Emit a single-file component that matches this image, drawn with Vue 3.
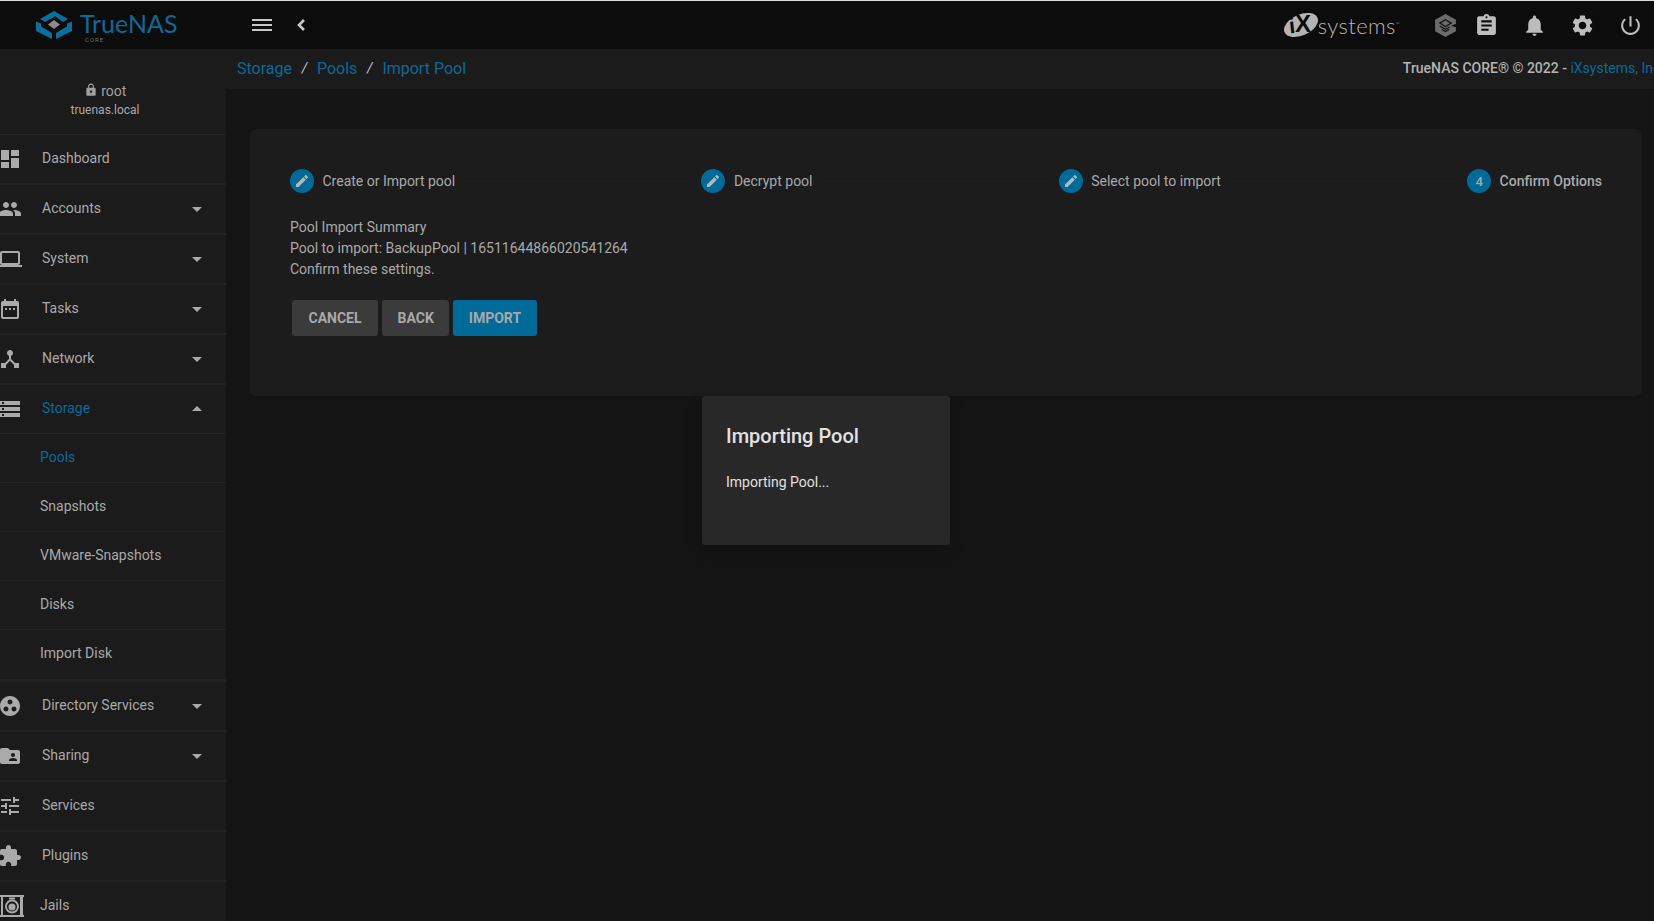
<template>
  <div class="page">
    <!-- top toolbar -->
    <header class="topbar">
      <div class="brand">
        <svg class="brand-mark" viewBox="0 0 36 28" width="36" height="28">
          <path d="M18 0L4 8l5 3 9-5 2-.9V.9z" fill="#0a6f9e" />
          <path d="M20 1.2V6l7 5 5-3z" fill="#0a6f9e" />
          <path d="M0 10.5v9.5l16 8v-6L5 15.5v-3z" fill="#0a6f9e" />
          <path d="M36 10.5v9.5l-16 8v-6l11-6.5v-3z" fill="#0a6f9e" />
          <path d="M18 9l6 4.5-6 4.5-6-4.5z" fill="#8a8a8a" />
        </svg>
        <div class="brand-name">
          <span>True</span><b>NAS</b>
          <small>CORE</small>
        </div>
      </div>
      <div class="top-nav">
        <svg viewBox="0 0 20 12" width="20" height="12" class="menu-ico"><path d="M0 0h20v2H0zM0 5h20v2H0zM0 10h20v2H0z" /></svg>
        <svg viewBox="0 0 8 12" width="8" height="12" class="back-ico"><path d="M7 1L2 6l5 5" /></svg>
      </div>
      <div class="top-right">
        <div class="ix-logo">
          <svg viewBox="0 0 36 28" width="36" height="28">
            <ellipse cx="18" cy="14" rx="18" ry="10.5" transform="rotate(-24 18 14)" fill="#b4b4b4" />
            <text x="6" y="22" class="ix-letters" transform="rotate(-6 12 14)">i</text>
            <text x="12" y="21" class="ix-letters ix-x">X</text>
          </svg>
          <span>systems</span><sup>™</sup>
        </div>
        <svg viewBox="0 0 24 24" class="top-ico tc-ico">
          <path d="M12 1l10 5.500v4L17.500 12l4.500 2v3.500L12 23 2 17.500v-11z" fill="#6b6b6b" />
          <path d="M12 6.500l5.500 3.200-5.500 3.200-5.500-3.200zM6.500 12.500l5.500 3.200 4-2.300M8.500 15.800l3.500 2 3.500-2" fill="none" stroke="#141414" stroke-width="1.200" />
        </svg>
        <svg v-for="ico in topIcons" :key="ico" viewBox="0 0 24 24" class="top-ico"><path :d="ico" /></svg>
      </div>
    </header>

    <div class="layout">
      <!-- sidebar -->
      <aside class="sidebar">
        <div class="user">
          <div class="user-name">
            <svg viewBox="0 0 24 24" width="14" height="14"><path d="M18 8h-1V6c0-2.760-2.240-5-5-5S7 3.240 7 6v2H6c-1.100 0-2 .9-2 2v10c0 1.100.9 2 2 2h12c1.100 0 2-.9 2-2V10c0-1.100-.9-2-2-2zm-6 9c-1.100 0-2-.9-2-2s.9-2 2-2 2 .9 2 2-.9 2-2 2zm3.100-9H8.900V6c0-1.710 1.390-3.100 3.100-3.100 1.710 0 3.100 1.390 3.100 3.100v2z" /></svg>
            root
          </div>
          <div class="user-host">truenas.local</div>
        </div>
        <nav>
          <template v-for="item in navItems" :key="item.label">
            <div class="nav-row" :class="{ active: item.active, open: item.open }">
              <svg v-if="item.icon" viewBox="0 0 24 24" class="nav-ico"><path :d="item.icon" /></svg>
              <svg v-else viewBox="0 0 24 24" class="nav-ico jail-ico">
                <path d="M0 1h24v2H0zM0 21h24v2H0zM1 3h2v18H1zM20 3h3v18h-3z" />
                <path d="M9 3.500h6v2H9z" />
                <circle cx="12" cy="12.500" r="6" fill="none" stroke="#aaa" stroke-width="1.800" />
                <circle cx="12" cy="13" r="3.500" />
              </svg>
              <span class="nav-label" :class="{ jail: !item.icon }">{{ item.label }}</span>
              <i v-if="item.arrow" class="caret" :class="{ up: item.open }"></i>
            </div>
            <div v-if="item.children" class="sub-list">
              <div v-for="(sub, i) in item.children" :key="sub" class="sub-row" :class="{ active: i === 0 }">{{ sub }}</div>
            </div>
          </template>
        </nav>
      </aside>

      <main class="content">
        <div class="crumbs">
          <div class="crumb-links">
            <a>Storage</a><em>/</em><a>Pools</a><em>/</em><a>Import Pool</a>
          </div>
          <div class="copyright">TrueNAS CORE® © 2022 - <a>iXsystems, Inc.</a></div>
        </div>

        <section class="card">
          <div class="stepper">
            <template v-for="(step, i) in steps" :key="step">
              <div class="step" :class="{ current: i === 3 }">
                <span class="step-dot">
                  <svg v-if="i < 3" viewBox="0 0 24 24" width="16" height="16"><path d="M3 17.250V21h3.750L17.810 9.940l-3.750-3.750L3 17.250zM20.710 7.040c.39-.39.39-1.020 0-1.410l-2.340-2.340c-.39-.39-1.020-.39-1.410 0l-1.830 1.830 3.750 3.750 1.830-1.830z" /></svg>
                  <template v-else>4</template>
                </span>
                <span>{{ step }}</span>
              </div>
              <div v-if="i < 3" class="step-line"></div>
            </template>
          </div>

          <div class="summary">
            <div>Pool Import Summary</div>
            <div>Pool to import: BackupPool | 16511644866020541264</div>
            <div>Confirm these settings.</div>
          </div>

          <div class="actions">
            <button class="btn cancel">CANCEL</button>
            <button class="btn">BACK</button>
            <button class="btn primary">IMPORT</button>
          </div>
        </section>
      </main>
    </div>

    <!-- progress dialog -->
    <div class="dialog">
      <h1>Importing Pool</h1>
      <p>Importing Pool...</p>
    </div>
  </div>
</template>

<script setup>
const topIcons = [
  'M19 3h-4.180C14.400 1.840 13.300 1 12 1c-1.300 0-2.400.84-2.820 2H5c-1.100 0-2 .9-2 2v14c0 1.100.9 2 2 2h14c1.100 0 2-.9 2-2V5c0-1.100-.9-2-2-2zm-7 0c.55 0 1 .45 1 1s-.45 1-1 1-1-.45-1-1 .45-1 1-1zm2 14H7v-2h7v2zm3-4H7v-2h10v2zm0-4H7V7h10v2z',
  'M12 22c1.100 0 2-.9 2-2h-4c0 1.100.89 2 2 2zm6-6v-5c0-3.070-1.640-5.640-4.500-6.320V4c0-.83-.67-1.500-1.500-1.500s-1.500.67-1.500 1.500v.68C7.630 5.360 6 7.920 6 11v5l-2 2v1h16v-1l-2-2z',
  'M19.140 12.940c.04-.3.06-.61.06-.94 0-.32-.02-.64-.07-.94l2.030-1.580c.18-.14.23-.41.12-.61l-1.920-3.320c-.12-.22-.37-.29-.59-.22l-2.390.96c-.5-.38-1.030-.7-1.620-.94l-.36-2.540c-.04-.24-.24-.41-.48-.41h-3.840c-.24 0-.43.17-.47.41l-.36 2.540c-.59.24-1.130.57-1.620.94l-2.390-.96c-.22-.08-.47 0-.59.22L2.740 8.870c-.12.21-.08.47.12.61l2.030 1.580c-.05.3-.09.63-.09.94s.02.64.07.94l-2.030 1.580c-.18.14-.23.41-.12.61l1.920 3.320c.12.22.37.29.59.22l2.390-.96c.5.38 1.030.7 1.620.94l.36 2.540c.05.24.24.41.48.41h3.840c.24 0 .44-.17.47-.41l.36-2.540c.59-.24 1.130-.56 1.620-.94l2.390.96c.22.08.47 0 .59-.22l1.920-3.320c.12-.22.07-.47-.12-.61l-2.010-1.580zM12 15.600c-1.980 0-3.600-1.620-3.600-3.600s1.620-3.600 3.600-3.600 3.600 1.620 3.600 3.600-1.620 3.600-3.600 3.600z',
  'M13 3h-2v10h2V3zm4.830 2.170l-1.420 1.420C17.990 7.860 19 9.810 19 12c0 3.870-3.130 7-7 7s-7-3.130-7-7c0-2.190 1.010-4.140 2.580-5.420L6.170 5.170C4.230 6.820 3 9.260 3 12c0 4.970 4.030 9 9 9s9-4.030 9-9c0-2.740-1.230-5.180-3.170-6.830z'
]

const navItems = [
  { label: 'Dashboard', icon: 'M3 13h8V3H3v10zm0 8h8v-6H3v6zm10 0h8V11h-8v10zm0-18v6h8V3h-8z' },
  { label: 'Accounts', arrow: true, icon: 'M16 11c1.660 0 2.990-1.340 2.990-3S17.660 5 16 5c-1.660 0-3 1.340-3 3s1.340 3 3 3zm-8 0c1.660 0 2.990-1.340 2.990-3S9.660 5 8 5C6.340 5 5 6.340 5 8s1.340 3 3 3zm0 2c-2.330 0-7 1.170-7 3.500V19h14v-2.500c0-2.330-4.670-3.500-7-3.500zm8 0c-.29 0-.62.02-.97.05 1.160.84 1.970 1.970 1.970 3.450V19h6v-2.500c0-2.330-4.670-3.500-7-3.500z' },
  { label: 'System', arrow: true, icon: 'M20 18c1.100 0 1.990-.9 1.990-2L22 6c0-1.100-.9-2-2-2H4c-1.100 0-2 .9-2 2v10c0 1.100.9 2 2 2H0v2h24v-2h-4zM4 6h16v10H4V6z' },
  { label: 'Tasks', arrow: true, icon: 'M19 4h-1V2h-2v2H8V2H6v2H5c-1.110 0-1.990.9-1.990 2L3 20c0 1.100.89 2 2 2h14c1.100 0 2-.9 2-2V6c0-1.100-.9-2-2-2zm0 16H5V9h14v11zM7 11h2v2H7zm4 0h2v2h-2zm4 0h2v2h-2z' },
  { label: 'Network', arrow: true, icon: 'M17 16l-4-4V8.820C14.160 8.400 15 7.300 15 6c0-1.660-1.340-3-3-3S9 4.340 9 6c0 1.300.84 2.400 2 2.820V12l-4 4H3v5h5v-3.050l4-4.200 4 4.200V21h5v-5h-4z' },
  { label: 'Storage', arrow: true, open: true, active: true, icon: 'M2 20h20v-4H2v4zm2-3h2v2H4v-2zM2 4v4h20V4H2zm4 3H4V5h2v2zm-4 7h20v-4H2v4zm2-3h2v2H4v-2z', children: ['Pools', 'Snapshots', 'VMware-Snapshots', 'Disks', 'Import Disk'] },
  { label: 'Directory Services', arrow: true, icon: 'M12 2C6.480 2 2 6.480 2 12s4.480 10 10 10 10-4.480 10-10S17.520 2 12 2zM8 17.500c-1.380 0-2.500-1.120-2.500-2.500s1.120-2.500 2.500-2.500 2.500 1.120 2.500 2.500-1.120 2.500-2.500 2.500zM9.500 8c0-1.380 1.120-2.500 2.500-2.500s2.500 1.120 2.500 2.500-1.120 2.500-2.500 2.500S9.500 9.380 9.500 8zm6.500 9.500c-1.380 0-2.500-1.120-2.500-2.500s1.120-2.500 2.500-2.500 2.500 1.120 2.500 2.500-1.120 2.500-2.500 2.500z' },
  { label: 'Sharing', arrow: true, icon: 'M20 6h-8l-2-2H4c-1.100 0-1.990.9-1.990 2L2 18c0 1.100.9 2 2 2h16c1.100 0 2-.9 2-2V8c0-1.100-.9-2-2-2zm-5 3c1.100 0 2 .9 2 2s-.9 2-2 2-2-.9-2-2 .9-2 2-2zm4 8h-8v-1c0-1.330 2.670-2 4-2s4 .67 4 2v1z' },
  { label: 'Services', icon: 'M3 17v2h6v-2H3zM3 5v2h10V5H3zm10 16v-2h8v-2h-8v-2h-2v6h2zM7 9v2H3v2h4v2h2V9H7zm14 4v-2H11v2h10zm-6-4h2V7h4V5h-4V3h-2v6z' },
  { label: 'Plugins', icon: 'M20.500 11H19V7c0-1.100-.9-2-2-2h-4V3.500C13 2.120 11.880 1 10.500 1S8 2.120 8 3.500V5H4c-1.100 0-1.990.9-1.990 2v3.800H3.500c1.490 0 2.700 1.210 2.700 2.700s-1.210 2.700-2.700 2.700H2V20c0 1.100.9 2 2 2h3.800v-1.500c0-1.490 1.210-2.700 2.700-2.700 1.490 0 2.700 1.210 2.700 2.700V22H17c1.100 0 2-.9 2-2v-4h1.500c1.380 0 2.500-1.120 2.500-2.500S21.880 11 20.500 11z' },
  { label: 'Jails', icon: '' }
]

const steps = ['Create or Import pool', 'Decrypt pool', 'Select pool to import', 'Confirm Options']
</script>

<style>
html, body {
  margin: 0;
  background: #141414;
  overflow: hidden;
}
</style>

<style scoped>
.page {
  position: relative;
  height: 921px;
  overflow: hidden;
  display: flex;
  flex-direction: column;
  font-family: Roboto, "Liberation Sans", sans-serif;
  font-size: 14px;
  color: #a9a9a9;
  background: #141414;
}

/* toolbar */
.topbar {
  height: 48px;
  flex: none;
  display: flex;
  align-items: center;
  background: #0c0c0c;
  border-top: 1px solid #d8d8d8;
}

.brand {
  width: 226px;
  flex: none;
  display: flex;
  align-items: center;
  padding-left: 36px;
  box-sizing: border-box;
}

.brand-name {
  position: relative;
  margin-left: 8px;
  margin-top: -5px;
  font-family: Lato, "Open Sans", sans-serif;
  font-size: 25px;
  line-height: 24px;
  color: #0a6a98;
}

.brand-name b {
  font-weight: 400;
}

.brand-name small {
  position: absolute;
  left: 5px;
  top: 25px;
  font-family: Roboto, sans-serif;
  font-size: 6px;
  line-height: 8px;
  letter-spacing: 1px;
  color: #6e6e6e;
}

.top-nav {
  display: flex;
  align-items: center;
  gap: 25px;
  padding-left: 26px;
}

.menu-ico {
  fill: #c8c8c8;
}

.back-ico {
  fill: none;
  stroke: #c8c8c8;
  stroke-width: 2.6;
}

.top-right {
  margin-left: auto;
  display: flex;
  align-items: center;
  padding-right: 11px;
  gap: 23px;
}

.ix-logo {
  display: flex;
  align-items: center;
  margin-right: 10px;
  font-family: Lato, sans-serif;
  font-weight: 300;
  font-size: 22px;
  color: #b4b4b4;
  letter-spacing: 0.4px;
}

.ix-logo span {
  margin-left: -1px;
  margin-top: 1px;
}

.ix-logo sup {
  font-size: 5px;
  align-self: flex-start;
  margin-top: 10px;
}

.ix-letters {
  font-family: "Liberation Sans", sans-serif;
  font-weight: 700;
  font-size: 22px;
  fill: #0c0c0c;
}

.ix-x {
  font-size: 24px;
}

.top-ico {
  width: 25px;
  height: 25px;
  fill: #bdbdbd;
}

.tc-ico {
  margin-right: -7px;
}

/* layout */
.layout {
  flex: 1;
  display: flex;
  min-height: 0;
}

.sidebar {
  width: 226px;
  flex: none;
  overflow: hidden;
  background: #1b1b1b;
}

.user {
  height: 86px;
  box-sizing: border-box;
  padding-top: 33px;
  border-bottom: 1px solid #232323;
  text-align: center;
  padding-right: 16px;
}

.user-name {
  font-size: 14px;
  line-height: 18px;
  color: #a0a0a0;
}

.user-name svg {
  fill: #a0a0a0;
  vertical-align: -1px;
}

.user-host {
  font-size: 12px;
  line-height: 18px;
  margin-top: 1px;
}

.nav-row {
  height: 48px;
  display: flex;
  align-items: center;
  border-bottom: 2px solid #232323;
}

.nav-row.open {
  height: 48px;
  border-bottom-width: 1px;
}

.nav-ico {
  width: 24px;
  height: 24px;
  flex: none;
  margin-left: -2px;
  fill: #aaa;
}

.jail-ico {
  margin-left: 0;
}

.nav-label {
  margin-left: 20px;
  margin-bottom: 2px;
  flex: 1;
}

.nav-label.jail {
  margin-left: 16px;
}

.nav-row.active .nav-label,
.sub-row.active {
  color: #0a6a98;
}

.caret {
  width: 0;
  height: 0;
  margin-right: 24px;
  border-left: 5px solid transparent;
  border-right: 5px solid transparent;
  border-top: 5px solid #aaa;
}

.caret.up {
  margin-bottom: 2px;
  border-top: 0;
  border-bottom: 5px solid #aaa;
}

.sub-list {
  border-bottom: 3px solid #232323;
}

.sub-row {
  height: 48px;
  line-height: 46px;
  padding-left: 40px;
  border-bottom: 1px solid #232323;
}

.sub-row:last-child {
  border-bottom: 0;
  height: 49px;
}

/* main */
.content {
  flex: 1;
  min-width: 0;
  overflow: hidden;
}

.crumbs {
  height: 40px;
  display: flex;
  align-items: center;
  justify-content: space-between;
  padding-left: 11px;
  padding-bottom: 2px;
  box-sizing: border-box;
  background: #1b1b1b;
  white-space: nowrap;
}

.crumb-links {
  display: flex;
  align-items: center;
  font-size: 16px;
  color: #0a6a98;
}

.crumb-links em {
  width: 25px;
  text-align: center;
  color: #c4c4c4;
  font-size: 14px;
}

.copyright {
  flex: none;
  margin-right: -10px;
  font-weight: 500;
  color: #b4b4b4;
}

.copyright a {
  font-weight: 400;
  color: #0a6a98;
}

.card {
  margin: 40px 12px 0 24px;
  height: 267px;
  box-sizing: border-box;
  padding: 40px 40px 0;
  background: #1c1c1c;
  border-radius: 6px;
}

.stepper {
  display: flex;
  align-items: center;
  height: 24px;
}

.step {
  display: flex;
  align-items: center;
  gap: 8.5px;
  white-space: nowrap;
}

.step.current {
  font-weight: 500;
}

.step-dot {
  width: 24px;
  height: 24px;
  border-radius: 50%;
  background: #006a98;
  display: flex;
  align-items: center;
  justify-content: center;
  font-size: 13px;
}

.step-dot svg {
  fill: #b8b8b8;
}

.step-line {
  flex: 1;
  height: 1px;
  margin: 0 8px;
  background: #1f1f1f;
}

.summary {
  margin-top: 24px;
  line-height: 21px;
}

.actions {
  display: flex;
  gap: 4px;
  margin-top: 20px;
  padding-left: 2px;
}

.btn {
  height: 36px;
  padding: 0 15.5px;
  border: 0;
  border-radius: 3px;
  background: #3b3b3b;
  color: #a9a9a9;
  font-family: inherit;
  font-size: 14px;
  font-weight: 700;
}

.btn.cancel {
  padding: 0 16.5px;
}

.btn.primary {
  background: #006a98;
}

/* dialog sits over the page */
.dialog {
  position: absolute;
  left: 702px;
  top: 396px;
  width: 248px;
  height: 149px;
  box-sizing: border-box;
  padding: 24px;
  border-radius: 3px;
  background: #282828;
  box-shadow: 0 6px 20px rgba(0, 0, 0, 0.1);
  color: #e2e2e2;
}

.dialog h1 {
  margin: 0 0 20px;
  font-size: 20px;
  line-height: 32px;
  font-weight: 500;
}

.dialog p {
  margin: 0;
  line-height: 20px;
}
</style>
